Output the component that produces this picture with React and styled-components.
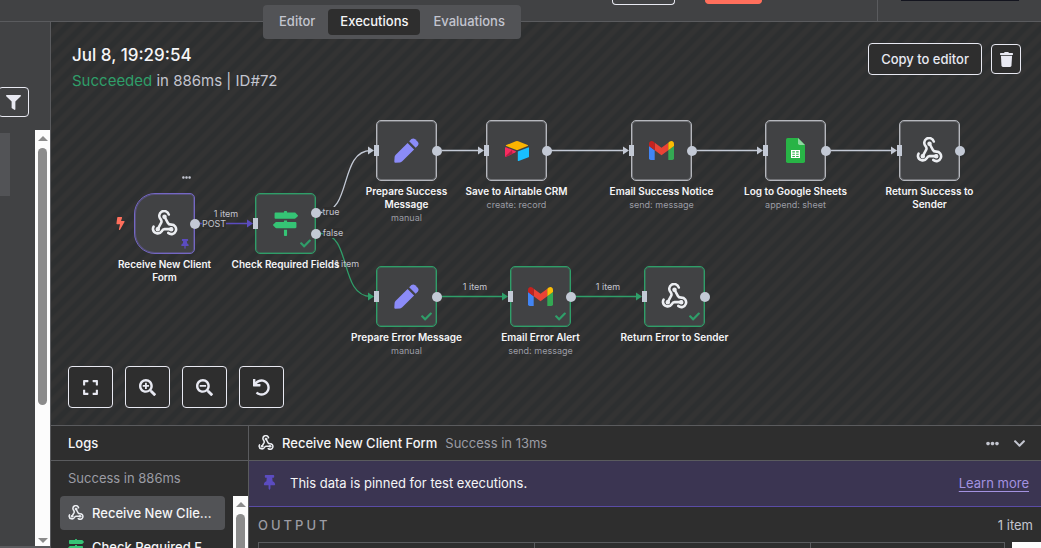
import React from "react";
import styled, { createGlobalStyle, css } from "styled-components";
import {
  FaBolt,
  FaCheck,
  FaChevronDown,
  FaEllipsisH,
  FaExpand,
  FaFilter,
  FaMapSigns,
  FaSearchMinus,
  FaSearchPlus,
  FaThumbtack,
  FaUndo,
} from "react-icons/fa";

const color = {
  panel: "#414244",
  canvas: "#2e2e2e",
  stripe: "#2d2f30",
  stripeAlt: "#333333",
  raised: "#525356",
  line: "#5a5b5e",
  text: "#f5f5f7",
  soft: "#c3c5cf",
  muted: "#9b9ca4",
  outline: "#e8e9f2",
  handle: "#c3c9d5",
  green: "#2f9e69",
  purple: "#5b4cc0",
  orange: "#ff6f5c",
};

const GlobalStyle = createGlobalStyle`
  * { box-sizing: border-box; }
  html, body, #root { height: 100%; }
  body {
    margin: 0;
    overflow: hidden;
    background: ${color.canvas};
    color: ${color.text};
    font-family: Inter, "Liberation Sans", sans-serif;
    font-size: 13px;
    line-height: 18px;
  }
  button { font: inherit; color: inherit; cursor: pointer; padding: 0; }
  svg { display: block; flex: none; }
  h1, h2, p, ul { margin: 0; padding: 0; }
`;

/* Page frame */

const Page = styled.div`
  position: relative;
  display: flex;
  flex-direction: column;
  height: 100vh;
`;

const Header = styled.header`
  display: flex;
  flex: 0 0 22px;
  background: ${color.panel};
  border-bottom: 1px solid ${color.line};
`;

const HeaderActions = styled.div`
  flex: 1;
  display: flex;
  align-items: flex-start;
  justify-content: flex-end;
  gap: 30px;
  padding-right: 115px;
`;

const HeaderButton = styled.button`
  width: ${(p) => (p.$primary ? 57 : 63)}px;
  height: ${(p) => (p.$primary ? 4 : 5)}px;
  border: 1px solid ${(p) => (p.$primary ? color.orange : color.outline)};
  border-top: 0;
  border-radius: 0 0 4px 4px;
  background: ${(p) => (p.$primary ? color.orange : "transparent")};
`;

const HeaderAside = styled.div`
  flex: 0 0 164px;
  padding: 0 22px 0 23px;
  border-left: 1px solid ${color.line};
`;

const Badge = styled.div`
  height: 1px;
  background: #14151f;
`;

const Tabs = styled.nav`
  position: absolute;
  z-index: 2;
  top: 5px;
  left: 263px;
  display: flex;
  gap: 1px;
  padding: 4px;
  border-radius: 4px;
  background: ${color.raised};
`;

const Tab = styled.button`
  height: 26px;
  padding: 0 12px 2px;
  border: 0;
  border-radius: 4px;
  font-weight: 500;
  color: ${(p) => (p.$active ? color.text : color.soft)};
  background: ${(p) => (p.$active ? color.canvas : "transparent")};
`;

const Body = styled.div`
  flex: 1;
  display: flex;
  min-height: 0;
`;

/* Sidebar */

const Sidebar = styled.aside`
  flex: 0 0 51px;
  display: flex;
  flex-direction: column;
  align-items: flex-start;
  overflow: hidden;
  background: ${color.panel};
  border-right: 1px solid ${color.line};
`;

const FilterButton = styled.button`
  display: grid;
  place-items: center;
  width: 31px;
  height: 30px;
  margin: 65px 0 13px -2px;
  border: 1px solid ${color.outline};
  border-radius: 4px;
  background: transparent;
  color: ${color.outline};
`;

const RunList = styled.div`
  flex: 1;
  align-self: stretch;
  display: flex;
  justify-content: space-between;
  min-height: 0;
  border-bottom: 2px solid ${color.line};
`;

const RunItem = styled.div`
  width: 10px;
  height: 63px;
  margin-top: 3px;
  background: ${color.raised};
`;

const Scrollbar = styled.div`
  flex: 0 0 15px;
  display: flex;
  flex-direction: column;
  align-items: center;
  gap: 7px;
  padding: 6px 0 3px;
  background: #fcfcfc;
`;

const Thumb = styled.div`
  width: 9px;
  flex: 0 1 ${(p) => p.$size};
  border-radius: 5px;
  background: #8b8b8b;
`;

const Arrow = styled.div`
  flex: none;
  border: solid transparent;
  border-width: 0 5px;
  ${(p) =>
    p.$down
      ? css`
          margin-top: auto;
          border-top: 5px solid #8b8b8b;
        `
      : css`
          border-bottom: 5px solid #8b8b8b;
        `}
`;

/* Workflow canvas */

const Main = styled.main`
  flex: 1;
  display: flex;
  flex-direction: column;
  min-width: 0;
`;

const Canvas = styled.section`
  position: relative;
  flex: 1;
  overflow: hidden;
  background: linear-gradient(
      135deg,
      ${color.stripe} 20%,
      ${color.stripeAlt} 30% 45%,
      ${color.stripe} 55% 70%,
      ${color.stripeAlt} 80% 95%,
      ${color.stripe}
    )
    0 0 / 16px 16px;
`;

const CanvasHeader = styled.div`
  position: relative;
  z-index: 1;
  display: flex;
  justify-content: space-between;
  align-items: flex-start;
  padding: 21px 20px 0 21px;
`;

const RunTitle = styled.h1`
  font-size: 17px;
  line-height: 24px;
  font-weight: 500;
`;

const RunStatus = styled.p`
  font-size: 15px;
  line-height: 28px;
  color: ${color.soft};
`;

const Succeeded = styled.span`
  color: ${color.green};
`;

const RunActions = styled.div`
  display: flex;
  align-items: center;
  gap: 9px;
`;

const OutlineButton = styled.button`
  display: grid;
  place-items: center;
  border: 1px solid ${color.outline};
  border-radius: 4px;
  background: ${color.canvas};
  color: ${color.outline};
  font-weight: 500;
`;

const TextButton = styled(OutlineButton)`
  height: 32px;
  padding: 0 12px;
`;

const SquareButton = styled(OutlineButton)`
  width: 30px;
  height: 30px;
`;

const ZoomButton = styled(OutlineButton)`
  width: 45px;
  height: 42px;
`;

const ZoomControls = styled.div`
  position: absolute;
  left: 17px;
  bottom: 17px;
  display: flex;
  gap: 12px;
`;

const Edges = styled.svg`
  position: absolute;
  top: 0;
  left: 0;
  width: 1000px;
  height: 400px;
`;

const EdgeLabel = styled.span`
  position: absolute;
  font-size: 9px;
  line-height: 10px;
  transform: translate(-50%, -50%);
  white-space: nowrap;
  color: ${color.soft};
  background: ${(p) => (p.$solid ? color.canvas : "transparent")};
`;

const NodeRoot = styled.div`
  position: absolute;
  display: flex;
  flex-direction: column;
  align-items: center;
  width: 121px;
  text-align: center;
`;

const NodeBox = styled.div`
  position: relative;
  display: grid;
  place-items: center;
  width: 61px;
  height: 61px;
  margin-bottom: 4px;
  border: 1px solid ${(p) => p.$border};
  box-shadow: inset 0 0 0 1px ${(p) => p.$border}66;
  border-radius: ${(p) => (p.$trigger ? "21px 5px 5px 21px" : "5px")};
  background: ${color.panel};
`;

const NodeName = styled.h2`
  font-size: 10px;
  line-height: 13px;
  font-weight: 600;
`;

const NodeSub = styled.p`
  font-size: 9px;
  line-height: 14px;
  color: ${color.muted};
`;

const NodeMark = styled.span`
  position: absolute;
  right: 4px;
  bottom: 4px;
  color: ${(p) => p.$color};
`;

const InputHandle = styled.span`
  position: absolute;
  left: -3px;
  top: 24px;
  width: 5px;
  height: 11px;
  background: ${color.handle};
`;

const OutputHandle = styled.span`
  position: absolute;
  right: -6px;
  top: ${(p) => p.$top}px;
  width: 10px;
  height: 10px;
  border-radius: 50%;
  background: ${color.handle};
`;

const Bolt = styled.span`
  position: absolute;
  left: -21px;
  top: 23px;
  color: ${color.orange};
`;

const NodeMenu = styled.span`
  position: absolute;
  top: -21px;
  right: 3px;
  color: ${color.soft};
`;

/* Logs */

const Logs = styled.section`
  flex: 0 0 123px;
  display: flex;
  overflow: hidden;
  background: ${color.canvas};
  border-top: 1px solid ${color.line};
`;

const LogColumn = styled.div`
  flex: 0 0 198px;
  min-width: 0;
  display: flex;
  flex-direction: column;
  border-right: 1px solid ${color.line};
`;

const PanelBar = styled.div`
  flex: 0 0 35px;
  display: flex;
  align-items: center;
  gap: 8px;
  padding: 0 15px 0 ${(p) => (p.$wide ? 17 : 9)}px;
  border-bottom: 1px solid ${color.line};
`;

const Strong = styled.strong`
  font-weight: 500;
`;

const Muted = styled.span`
  color: ${color.muted};
`;

const BarIcons = styled.div`
  display: flex;
  align-items: center;
  gap: 14px;
  margin-left: auto;
`;

const IconButton = styled.button`
  border: 0;
  background: transparent;
  color: ${color.soft};
`;

const LogSummary = styled.p`
  flex: 0 0 35px;
  padding: 8px 17px 0;
  color: ${color.muted};
`;

const LogScroll = styled.div`
  flex: 0 0 120px;
  display: flex;
`;

const LogList = styled.ul`
  flex: 1;
  min-width: 0;
  padding: 0 8px 0 9px;
  list-style: none;
`;

const LogRow = styled.button`
  display: flex;
  align-items: center;
  gap: 8px;
  width: 100%;
  height: 34px;
  padding: 0 12px 1px 8px;
  border: 0;
  border-radius: 4px;
  text-align: left;
  font-weight: 500;
  background: ${(p) => (p.$active ? color.raised : "transparent")};
`;

const LogName = styled.span`
  flex: 1;
  min-width: 0;
  overflow: hidden;
  white-space: nowrap;
  text-overflow: ellipsis;
`;

const Detail = styled.div`
  flex: 1;
  min-width: 0;
  display: flex;
  flex-direction: column;
`;

const Banner = styled.div`
  flex: 0 0 46px;
  display: flex;
  align-items: center;
  gap: 13px;
  padding: 0 12px 2px 13px;
  color: ${color.text};
  background: #3b3552;
  border-bottom: 1px solid #5a4ca6;
`;

const BannerLink = styled.a`
  margin-left: auto;
  color: #a392e0;
  text-underline-offset: 3px;
`;

const OutputBar = styled.div`
  flex: 0 0 35px;
  display: flex;
  align-items: center;
  justify-content: space-between;
  padding: 0 8px 0 9px;
  color: ${color.muted};
`;

const OutputTitle = styled.h2`
  font-size: 13px;
  font-weight: 500;
  letter-spacing: 3px;
`;

const ItemCount = styled.span`
  color: ${color.soft};
`;

const TableArea = styled.div`
  flex: 0 0 60px;
  display: flex;
  gap: 7px;
  padding-left: 9px;
`;

const DataTable = styled.table`
  flex: 1;
  table-layout: fixed;
  border-collapse: collapse;
  height: 30px;
`;

const DataHead = styled.th`
  width: ${(p) => p.$width};
  padding: 0;
  border: 1px solid ${color.line};
`;

const TableScroll = styled.div`
  flex: 0 0 29px;
  background: #fcfcfc;
`;

/* Drawings */

const WebhookIcon = ({ size }) => (
  <svg width={size} height={size} viewBox="0 0 24 24" fill="none" stroke="#eceef2" strokeWidth="2.3" strokeLinecap="round" strokeLinejoin="round">
    <path d="M18 17h-6c-1.100 0-1.900.9-2.480 1.900A4.300 4.300 0 0 1 1.700 17c0-.8.200-1.500.6-2.200" />
    <path d="m6 17 3.100-5.700c.5-1 .1-2.200-.5-3.100a4.300 4.300 0 1 1 7.200-4.200" />
    <path d="m12 6 3.100 5.700c.5 1 1.700 1.300 2.900 1.300a4.200 4.200 0 1 1-2.600 7.400" />
    <g fill="#eceef2" strokeWidth="1">
      <circle cx="12" cy="6" r="1.500" />
      <circle cx="6" cy="17" r="1.500" />
      <circle cx="18" cy="17" r="1.500" />
    </g>
  </svg>
);

const TrashIcon = () => (
  <svg width="13" height="15" viewBox="0 0 13 15" fill="currentColor">
    <path d="M4.200.6Q4.500 0 5.100 0h2.800q.6 0 .9.600l.2.500h3.300q.7 0 .7.600v.8q0 .4-.4.400H.4Q0 2.900 0 2.500v-.8q0-.6.700-.6H4Z" />
    <path d="M.9 3.800h11.200l-.6 9.800q-.1 1.400-1.400 1.400H2.900q-1.300 0-1.400-1.400Z" />
  </svg>
);

const PencilIcon = () => (
  <svg width="25" height="25" viewBox="0 0 25 25" fill="#8b8bf8">
    <path d="M13.600 4.900 20.100 11.400 8 23.500q-.8.800-1.900.9L1.500 24.700Q.2 24.700.3 23.400L.6 19q.1-1.100.9-1.900Z" />
    <path d="M15.200 3.300 17.400 1.100Q19.400-.3 21.200 1.300L23.700 3.800Q25.300 5.700 23.900 7.500L21.700 9.800Z" />
  </svg>
);

const AirtableIcon = () => (
  <svg width="26" height="22" viewBox="0 0 26 22">
    <path d="M11.800 1.300 2.300 5.100q-1 .5 0 1l9.500 3.700q1.200.5 2.400 0l9.400-3.700q1-.5 0-1l-9.400-3.800q-1.200-.5-2.400 0Z" fill="#fcb400" />
    <path d="M13.800 12v8.400q0 .9.900.6l9.800-3.800q.5-.2.5-.8V8q0-.9-.9-.6l-9.700 3.800q-.6.200-.6.800Z" fill="#18bfff" />
    <path d="M11.500 12.300 2.100 16.800q-1.100.4-1.100-.6V8q0-1 1-.7l9.300 3.700q1.200.6.200 1.300Z" fill="#f82b60" />
    <path d="m8.600 13.700-6.500 3.100q-.7.200-1-.2L8 10Z" fill="#ba1e45" />
  </svg>
);

const GmailIcon = () => (
  <svg width="25" height="19" viewBox="0 0 25 19">
    <path d="M0 5v12.300Q0 19 1.700 19h4V9.200Z" fill="#4285f4" />
    <path d="M25 5v12.300q0 1.700-1.700 1.700h-4V9.200Z" fill="#34a853" />
    <path d="M5.700 1.700v7.500l6.800 5.100 6.800-5.100V1.700l-6.800 5.100Z" fill="#ea4335" />
    <path d="M0 2.700V5l5.700 4.200V1.700L4.300.6Q3-.3 1.500.3 0 1 0 2.700Z" fill="#c5221f" />
    <path d="M25 2.700V5l-5.700 4.200V1.700L20.700.6Q22-.3 23.500.3 25 1 25 2.700Z" fill="#fbbc04" />
  </svg>
);

const SheetsIcon = () => (
  <svg width="19" height="25" viewBox="0 0 19 25">
    <path d="M1.700 0H12l7 7v16.300q0 1.700-1.700 1.700H1.700Q0 25 0 23.300V1.700Q0 0 1.700 0Z" fill="#28b446" />
    <path d="M12 0v5.300Q12 7 13.700 7H19Z" fill="#8ed8a0" />
    <path d="M5 12h9v8H5Zm1.300 1.300v1.300h2.600v-1.300Zm3.800 0v1.300h2.600v-1.300Zm-3.800 2.500v1h2.600v-1Zm3.800 0v1h2.600v-1Zm-3.800 2.200v1h2.600v-1Zm3.800 0v1h2.600v-1Z" fill="#fff" />
  </svg>
);

const nodeIcons = {
  webhook: <WebhookIcon size={27} />,
  signs: <FaMapSigns size={25} color="#35c475" />,
  pencil: <PencilIcon />,
  airtable: <AirtableIcon />,
  gmail: <GmailIcon />,
  sheets: <SheetsIcon />,
};

/* Canvas data: x and y are the top-left corner of each node's box */

const nodes = [
  { x: 83, y: 171, icon: "webhook", name: "Receive New Client Form", state: "pinned", trigger: true },
  { x: 204, y: 171, icon: "signs", name: "Check Required Fields", state: "done", outputs: [14, 35] },
  { x: 325, y: 98, icon: "pencil", name: "Prepare Success Message", sub: "manual" },
  { x: 435, y: 98, icon: "airtable", name: "Save to Airtable CRM", sub: "create: record" },
  { x: 580, y: 98, icon: "gmail", name: "Email Success Notice", sub: "send: message" },
  { x: 714, y: 98, icon: "sheets", name: "Log to Google Sheets", sub: "append: sheet" },
  { x: 848, y: 98, icon: "webhook", name: "Return Success to Sender" },
  { x: 325, y: 244, icon: "pencil", name: "Prepare Error Message", sub: "manual", state: "done" },
  { x: 459, y: 244, icon: "gmail", name: "Email Error Alert", sub: "send: message", state: "done" },
  { x: 593, y: 244, icon: "webhook", name: "Return Error to Sender", state: "done" },
];

/* Long names break before their last word */
const wrapped = new Set(["Receive New Client Form", "Prepare Success Message", "Return Success to Sender"]);

const borders = { pinned: "#7467c4", done: color.green, idle: "#b5b7bd" };

const edges = [
  { d: "M148 201.500H200", end: [202, 201.5], stroke: color.purple },
  { d: "M270 190.500C301 190.500 288 128.500 320 128.500", end: [323, 128.5], stroke: color.handle },
  { d: "M270 211.500C301 211.500 288 274.500 320 274.500", end: [323, 274.5], stroke: color.green },
  { d: "M391 128.500H431", end: [433, 128.5], stroke: color.handle },
  { d: "M500 128.500H576", end: [578, 128.5], stroke: color.handle },
  { d: "M646 128.500H710", end: [712, 128.5], stroke: color.handle },
  { d: "M780 128.500H843", end: [846, 128.5], stroke: color.handle },
  { d: "M391 274.500H455", end: [457, 274.5], stroke: color.green },
  { d: "M525 274.500H589", end: [591, 274.5], stroke: color.green },
];

const edgeLabels = [
  { text: "1 item", x: 175, y: 192 },
  { text: "POST", x: 163, y: 202, solid: true },
  { text: "true", x: 280, y: 190, solid: true },
  { text: "false", x: 282, y: 211, solid: true },
  { text: "1 item", x: 296, y: 242 },
  { text: "1 item", x: 424, y: 265 },
  { text: "1 item", x: 557, y: 265 },
];

function NodeTitle({ name }) {
  if (!wrapped.has(name)) return <NodeName>{name}</NodeName>;
  const cut = name.lastIndexOf(" ");
  return (
    <NodeName>
      {name.slice(0, cut)}
      <br />
      {name.slice(cut + 1)}
    </NodeName>
  );
}

function WorkflowNode({ node }) {
  const { x, y, icon, name, sub, state = "idle", trigger, outputs = [25] } = node;
  return (
    <NodeRoot style={{ left: x - 30, top: y }}>
      <NodeBox $border={borders[state]} $trigger={trigger}>
        {nodeIcons[icon]}
        {trigger ? (
          <>
            <Bolt><FaBolt size={13} /></Bolt>
            <NodeMenu><FaEllipsisH size={9} /></NodeMenu>
          </>
        ) : (
          <InputHandle />
        )}
        {outputs.map((top) => <OutputHandle key={top} $top={top} />)}
        {state === "done" && <NodeMark $color={color.green}><FaCheck size={11} /></NodeMark>}
        {state === "pinned" && <NodeMark $color={color.purple}><FaThumbtack size={10} /></NodeMark>}
      </NodeBox>
      <NodeTitle name={name} />
      {sub && <NodeSub>{sub}</NodeSub>}
    </NodeRoot>
  );
}

export default function App() {
  return (
    <>
      <GlobalStyle />
      <Page>
        <Header>
          <HeaderActions>
            <HeaderButton aria-label="Share" />
            <HeaderButton $primary aria-label="Save" />
          </HeaderActions>
          <HeaderAside><Badge /></HeaderAside>
        </Header>
        <Tabs>
          <Tab>Editor</Tab>
          <Tab $active>Executions</Tab>
          <Tab>Evaluations</Tab>
        </Tabs>
        <Body>
          <Sidebar>
            <FilterButton aria-label="Filter executions"><FaFilter size={15} /></FilterButton>
            <RunList>
              <RunItem />
              <Scrollbar>
                <Arrow />
                <Thumb $size="257px" />
                <Arrow $down />
              </Scrollbar>
            </RunList>
          </Sidebar>
          <Main>
            <Canvas>
              <Edges>
                {edges.map(({ d, end: [ex, ey], stroke }) => (
                  <g key={d}>
                    <path d={d} fill="none" stroke={stroke} strokeWidth="1.300" />
                    <path d={`M${ex - 6} ${ey - 4}L${ex} ${ey}L${ex - 6} ${ey + 4}Z`} fill={stroke} />
                  </g>
                ))}
              </Edges>
              {edgeLabels.map(({ text, x, y, solid }) => (
                <EdgeLabel key={`${x}-${y}`} $solid={solid} style={{ left: x, top: y }}>{text}</EdgeLabel>
              ))}
              {nodes.map((node) => <WorkflowNode key={node.name} node={node} />)}
              <CanvasHeader>
                <div>
                  <RunTitle>Jul 8, 19:29:54</RunTitle>
                  <RunStatus><Succeeded>Succeeded</Succeeded> in 886ms | ID#72</RunStatus>
                </div>
                <RunActions>
                  <TextButton>Copy to editor</TextButton>
                  <SquareButton aria-label="Delete execution"><TrashIcon /></SquareButton>
                </RunActions>
              </CanvasHeader>
              <ZoomControls>
                <ZoomButton aria-label="Zoom to fit"><FaExpand size={17} /></ZoomButton>
                <ZoomButton aria-label="Zoom in"><FaSearchPlus size={17} /></ZoomButton>
                <ZoomButton aria-label="Zoom out"><FaSearchMinus size={17} /></ZoomButton>
                <ZoomButton aria-label="Reset zoom"><FaUndo size={17} /></ZoomButton>
              </ZoomControls>
            </Canvas>
            <Logs>
              <LogColumn>
                <PanelBar $wide><Strong>Logs</Strong></PanelBar>
                <LogSummary>Success in 886ms</LogSummary>
                <LogScroll>
                  <LogList>
                    <li>
                      <LogRow $active><WebhookIcon size={16} /><LogName>Receive New Client Form</LogName></LogRow>
                    </li>
                    <li>
                      <LogRow><FaMapSigns size={16} color="#35c475" /><LogName>Check Required F</LogName></LogRow>
                    </li>
                  </LogList>
                  <Scrollbar>
                    <Arrow />
                    <Thumb $size="90px" />
                  </Scrollbar>
                </LogScroll>
              </LogColumn>
              <Detail>
                <PanelBar>
                  <WebhookIcon size={16} />
                  <Strong>Receive New Client Form</Strong>
                  <Muted>Success in 13ms</Muted>
                  <BarIcons>
                    <IconButton aria-label="More options"><FaEllipsisH size={13} /></IconButton>
                    <IconButton aria-label="Collapse logs"><FaChevronDown size={13} /></IconButton>
                  </BarIcons>
                </PanelBar>
                <Banner>
                  <FaThumbtack size={15} color={color.purple} />
                  This data is pinned for test executions.
                  <BannerLink href="#learn">Learn more</BannerLink>
                </Banner>
                <OutputBar>
                  <OutputTitle>OUTPUT</OutputTitle>
                  <ItemCount>1 item</ItemCount>
                </OutputBar>
                <TableArea>
                  <DataTable>
                    <thead>
                      <tr>
                        <DataHead $width="37%" />
                        <DataHead $width="37%" />
                        <DataHead $width="26%" />
                      </tr>
                    </thead>
                  </DataTable>
                  <TableScroll />
                </TableArea>
              </Detail>
            </Logs>
          </Main>
        </Body>
      </Page>
    </>
  );
}
